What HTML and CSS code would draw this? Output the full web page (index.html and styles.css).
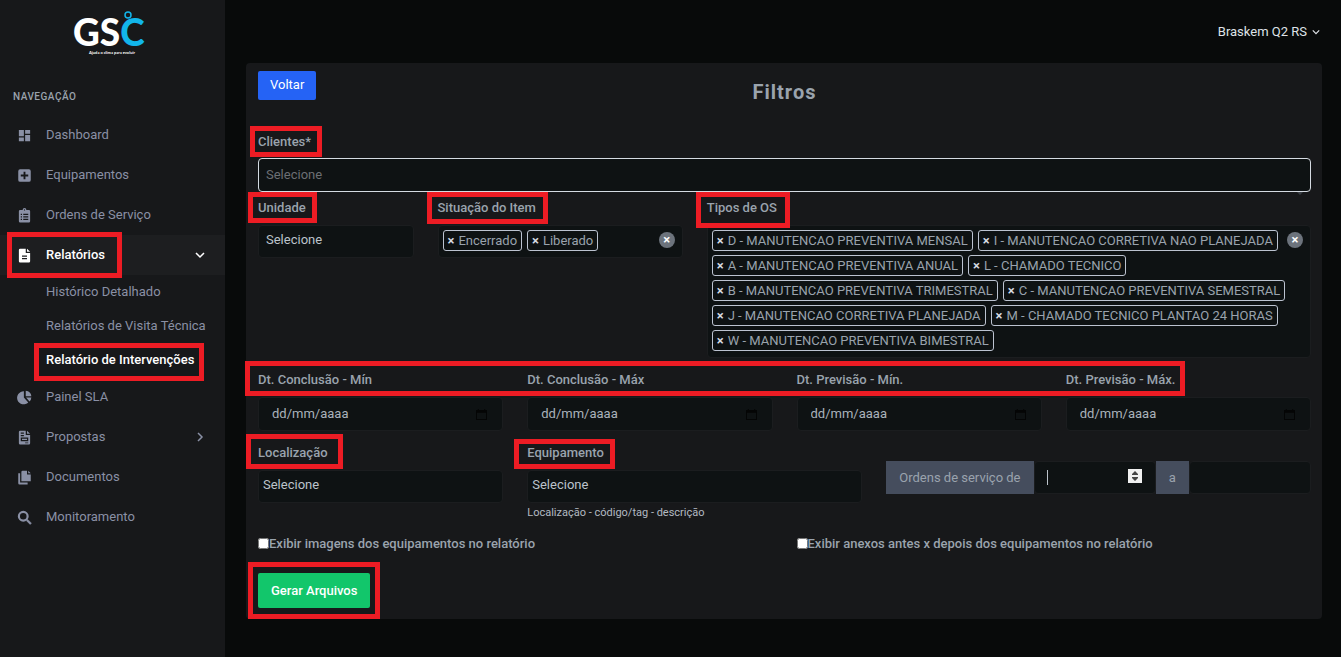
FILE: index.html
```html
<!DOCTYPE html>
<html lang="pt-BR">
<head>
<meta charset="utf-8">
<title>GSC - Relatório de Intervenções</title>
<link rel="stylesheet" href="styles.css">
</head>
<body>
<div class="app">
  <aside class="sidebar">
    <a class="logo" href="#" aria-label="GSC">
      <svg width="76" height="44" viewBox="0 0 76 44">
        <text class="logo-main" x="0" y="35">GS<tspan class="logo-accent">C</tspan></text>
        <circle cx="55" cy="4" r="3" fill="none" stroke="#12b5ea" stroke-width="1.500"/>
        <text class="logo-tag" x="39" y="43" text-anchor="middle">Ajuda o clima para evoluir</text>
      </svg>
    </a>
    <p class="nav-title">NAVEGAÇÃO</p>
    <nav>
      <ul class="nav">
        <li><a class="nav-link" href="#"><svg class="icon" viewBox="0 0 24 24"><path d="M13 3v6h8V3m-8 18h8V11h-8M3 21h8v-6H3m0-2h8V3H3v10z"/></svg>Dashboard</a></li>
        <li><a class="nav-link" href="#"><svg class="icon" viewBox="0 0 24 24"><path fill-rule="evenodd" d="M5 2h14a3 3 0 0 1 3 3v14a3 3 0 0 1-3 3H5a3 3 0 0 1-3-3V5a3 3 0 0 1 3-3zm5.500 4v4.500H6v3h4.500V18h3v-4.500H18v-3h-4.500V6z"/></svg>Equipamentos</a></li>
        <li><a class="nav-link" href="#"><svg class="icon" viewBox="0 0 24 24"><path fill-rule="evenodd" d="M5 3h4a3 3 0 0 1 6 0h4a2 2 0 0 1 2 2v16a2 2 0 0 1-2 2H5a2 2 0 0 1-2-2V5a2 2 0 0 1 2-2zm7-1a1 1 0 1 0 0 2 1 1 0 0 0 0-2zM6 9v2h2V9zm4 0v2h8V9zm-4 4v2h2v-2zm4 0v2h8v-2zm-4 4v2h2v-2zm4 0v2h8v-2z"/></svg>Ordens de Serviço</a></li>
        <li>
          <a class="nav-link active" href="#"><svg class="icon" viewBox="0 0 24 24"><path fill-rule="evenodd" d="M5 1h9v7h7v13a2 2 0 0 1-2 2H5a2 2 0 0 1-2-2V3a2 2 0 0 1 2-2zm11 0 5 5h-5zM8 12v2h8v-2zm0 4v2h8v-2z"/></svg>Relatórios<svg class="chevron" viewBox="0 0 10 10"><path d="m1 3 4 4 4-4"/></svg><span class="mark mark-reports"></span></a>
          <ul class="subnav">
            <li><a class="sub-link" href="#">Histórico Detalhado</a></li>
            <li><a class="sub-link" href="#">Relatórios de Visita Técnica</a></li>
            <li><a class="sub-link active" href="#">Relatório de Intervenções<span class="mark mark-interventions"></span></a></li>
          </ul>
        </li>
        <li><a class="nav-link" href="#"><svg class="icon" viewBox="0 0 24 24"><path d="M11 2v10l7 8A10.500 10.500 0 1 1 11 2zM14 1a10 10 0 0 1 9 9h-9zM14.500 12H23a10 10 0 0 1-3 6.500z"/></svg>Painel SLA</a></li>
        <li><a class="nav-link" href="#"><svg class="icon" viewBox="0 0 24 24"><path fill-rule="evenodd" d="M5 1h9v7h7v13a2 2 0 0 1-2 2H5a2 2 0 0 1-2-2V3a2 2 0 0 1 2-2zm11 0 5 5h-5zM6 4v2h5V4zm0 4v2h5V8zm0 4v6h12v-6zm2 2h8v2H8zm5 6v1h5v-1z"/></svg>Propostas<svg class="chevron" viewBox="0 0 10 10"><path d="m3 1 4 4-4 4"/></svg></a></li>
        <li><a class="nav-link" href="#"><svg class="icon" viewBox="0 0 24 24"><path d="M9 1h7v6h6v11H7V3a2 2 0 0 1 2-2zm9 0 4 4h-4zM2 5h3v15h12v3H4a2 2 0 0 1-2-2z"/></svg>Documentos</a></li>
        <li><a class="nav-link" href="#"><svg class="icon" viewBox="0 0 24 24"><circle cx="10" cy="10" r="7" fill="none" stroke="currentColor" stroke-width="3.500"/><path d="m15 17 2-2 6 6-2 2z" stroke="currentColor"/></svg>Monitoramento</a></li>
      </ul>
    </nav>
  </aside>

  <main class="main">
    <header class="topbar">
      <button class="user" type="button">Braskem Q2 RS<svg class="user-chevron" viewBox="0 0 10 10"><path d="m1 3 4 4 4-4"/></svg></button>
    </header>

    <form class="card">
      <div class="card-head">
        <button class="btn btn-back" type="button">Voltar</button>
        <h1 class="title">Filtros</h1>
      </div>

      <div class="field clients">
        <label class="label" for="clientes">Clientes*<span class="mark mark-clients"></span></label>
        <input class="control control-focus" id="clientes" type="text" placeholder="Selecione">
      </div>

      <div class="row">
        <div class="field span-2">
          <label class="label" for="unidade">Unidade<span class="mark mark-unit"></span></label>
          <select class="control" id="unidade"><option>Selecione</option></select>
        </div>
        <div class="field span-3">
          <span class="label" id="situacao">Situação do Item<span class="mark mark-status"></span></span>
          <div class="tags" role="group" aria-labelledby="situacao">
            <button class="tag" type="button"><b>×</b>Encerrado</button>
            <button class="tag" type="button"><b>×</b>Liberado</button>
            <button class="clear" type="button" aria-label="Limpar">×</button>
          </div>
        </div>
        <div class="field span-7">
          <span class="label" id="tipos">Tipos de OS<span class="mark mark-types"></span></span>
          <div class="tags" role="group" aria-labelledby="tipos">
            <button class="tag" type="button"><b>×</b>D - MANUTENCAO PREVENTIVA MENSAL</button>
            <button class="tag" type="button"><b>×</b>I - MANUTENCAO CORRETIVA NAO PLANEJADA</button>
            <button class="tag" type="button"><b>×</b>A - MANUTENCAO PREVENTIVA ANUAL</button>
            <button class="tag" type="button"><b>×</b>L - CHAMADO TECNICO</button>
            <button class="tag" type="button"><b>×</b>B - MANUTENCAO PREVENTIVA TRIMESTRAL</button>
            <button class="tag" type="button"><b>×</b>C - MANUTENCAO PREVENTIVA SEMESTRAL</button>
            <button class="tag" type="button"><b>×</b>J - MANUTENCAO CORRETIVA PLANEJADA</button>
            <button class="tag" type="button"><b>×</b>M - CHAMADO TECNICO PLANTAO 24 HORAS</button>
            <button class="tag" type="button"><b>×</b>W - MANUTENCAO PREVENTIVA BIMESTRAL</button>
            <button class="clear" type="button" aria-label="Limpar">×</button>
          </div>
        </div>
      </div>

      <div class="row">
        <div class="field span-3">
          <label class="label" for="conc-min">Dt. Conclusão - Mín</label>
          <div class="date"><input id="conc-min" type="text" placeholder="dd/mm/aaaa"><svg class="calendar" viewBox="0 0 12 12"><path fill-rule="evenodd" d="M2 0h1v1h6V0h1v1h2v11H0V1h2zM1 4v7h10V4z"/></svg></div>
        </div>
        <div class="field span-3">
          <label class="label" for="conc-max">Dt. Conclusão - Máx</label>
          <div class="date"><input id="conc-max" type="text" placeholder="dd/mm/aaaa"><svg class="calendar" viewBox="0 0 12 12"><path fill-rule="evenodd" d="M2 0h1v1h6V0h1v1h2v11H0V1h2zM1 4v7h10V4z"/></svg></div>
        </div>
        <div class="field span-3">
          <label class="label" for="prev-min">Dt. Previsão - Mín.</label>
          <div class="date"><input id="prev-min" type="text" placeholder="dd/mm/aaaa"><svg class="calendar" viewBox="0 0 12 12"><path fill-rule="evenodd" d="M2 0h1v1h6V0h1v1h2v11H0V1h2zM1 4v7h10V4z"/></svg></div>
        </div>
        <div class="field span-3">
          <label class="label" for="prev-max">Dt. Previsão - Máx.</label>
          <div class="date"><input id="prev-max" type="text" placeholder="dd/mm/aaaa"><svg class="calendar" viewBox="0 0 12 12"><path fill-rule="evenodd" d="M2 0h1v1h6V0h1v1h2v11H0V1h2zM1 4v7h10V4z"/></svg></div>
        </div>
        <span class="mark mark-dates"></span>
      </div>

      <div class="row">
        <div class="field span-3">
          <label class="label" for="local">Localização<span class="mark mark-place"></span></label>
          <select class="control control-tight" id="local"><option>Selecione</option></select>
        </div>
        <div class="field span-4">
          <label class="label" for="equip">Equipamento<span class="mark mark-equipment"></span></label>
          <select class="control control-tight" id="equip"><option>Selecione</option></select>
          <small class="hint">Localização - código/tag - descrição</small>
        </div>
        <div class="span-5 range">
          <label class="addon" for="os-de">Ordens de serviço de</label>
          <div class="number">
            <input id="os-de" type="number">
            <span class="caret"></span>
            <svg class="spinner" viewBox="0 0 14 14"><path d="M7 2 4 5v1h6V5zm0 10L4 9V8h6v1z"/></svg>
          </div>
          <label class="addon" for="os-ate">a</label>
          <div class="number"><input id="os-ate" type="number"></div>
        </div>
      </div>

      <div class="row checks">
        <label class="check span-6"><input type="checkbox">Exibir imagens dos equipamentos no relatório</label>
        <label class="check span-6"><input type="checkbox">Exibir anexos antes x depois dos equipamentos no relatório</label>
      </div>

      <button class="btn btn-submit" type="submit">Gerar Arquivos<span class="mark mark-submit"></span></button>
    </form>
  </main>
</div>
</body>
</html>
```
FILE: styles.css
```css
* { box-sizing: border-box; }
body {
  margin: 0;
  background: #080a0a;
  color: #9aa3ad;
  font: 13px/18px Roboto, "Liberation Sans", sans-serif;
}
button, input, select { font: inherit; color: inherit; }
button { cursor: pointer; }
a { color: inherit; text-decoration: none; }
ul { list-style: none; margin: 0; padding: 0; }

.app { display: flex; min-height: 100vh; }

/* Sidebar */
.sidebar { flex: 0 0 225px; background: #17181a; }
.logo { display: flex; justify-content: center; padding: 11px 4px 0 0; }
.logo svg { overflow: visible; }
.logo-main { font: 900 37px Lato, sans-serif; fill: #fff; }
.logo-accent { fill: #12b5ea; }
.logo-tag { font: 700 4px Lato, sans-serif; fill: #fff; }
.nav-title {
  margin: 33px 0 9px;
  padding-left: 13px;
  font-size: 10px;
  font-weight: 500;
  letter-spacing: 0.5px;
}
.nav { color: #8a90a5; }
.nav-link {
  position: relative;
  display: flex;
  align-items: center;
  height: 40px;
  padding: 0 20px 0 17px;
}
.nav-link.active { background: #1d1e20; color: #fff; font-weight: 500; }
.icon { width: 15px; height: 15px; margin-right: 14px; fill: currentColor; }
.chevron, .user-chevron {
  width: 10px;
  height: 10px;
  fill: none;
  stroke: currentColor;
  stroke-width: 1.5;
}
.chevron { margin-left: auto; }
.user-chevron { width: 8px; height: 8px; }
.sub-link {
  position: relative;
  display: block;
  padding: 8px 0 8px 46px;
  white-space: nowrap;
}
.sub-link.active { color: #fff; font-weight: 500; }

/* Content */
.main { flex: 1; min-width: 0; padding: 0 19px 39px 21px; }
.topbar { display: flex; justify-content: flex-end; align-items: center; height: 63px; }
.user {
  display: flex;
  align-items: center;
  gap: 5px;
  padding: 0 2px 0 0;
  border: 0;
  background: none;
  color: #dfe3e8;
}
.card {
  padding: 8px 11px 11px 12px;
  border-radius: 4px;
  background: #17181a;
}
.card-head {
  display: grid;
  grid-template-columns: 1fr auto 1fr;
  align-items: start;
  margin-bottom: 29px;
}
.title {
  margin: 9px 0 0;
  font-size: 20px;
  line-height: 24px;
  font-weight: 700;
  letter-spacing: 1px;
}
.btn {
  position: relative;
  border: 0;
  border-radius: 2px;
  color: #fff;
}
.btn-back { justify-self: start; height: 29px; padding: 0 12px 2px; background: #2563f5; }
.btn-submit { display: block; height: 35px; padding: 0 13px; background: #12c66b; font-weight: 500; }

.row {
  position: relative;
  display: grid;
  grid-template-columns: repeat(12, minmax(0, 1fr));
  align-items: start;
  column-gap: 24px;
  margin-bottom: 13px;
}
.span-2 { grid-column: span 2; }
.span-3 { grid-column: span 3; }
.span-4 { grid-column: span 4; }
.span-5 { grid-column: span 5; }
.span-6 { grid-column: span 6; }
.span-7 { grid-column: span 7; }

.field { display: flex; flex-direction: column; align-items: stretch; }
.label {
  position: relative;
  align-self: flex-start;
  margin-bottom: 8px;
  font-weight: 500;
}
.control, .tags, .date, .number {
  border: 1px solid #1b1d1f;
  border-radius: 4px;
  background: #0e1213;
}
.control {
  appearance: none;
  width: 100%;
  height: 33px;
  padding: 0 7px 4px;
  color: #bcc3cb;
}
.control-tight { padding-left: 4px; }
.control-focus { height: 34px; padding-bottom: 2px; border-color: #d5dbe2; }
.control-focus::placeholder { color: #6c6f73; }
.clients { position: relative; margin-bottom: 7px; }
.clients .label { margin-bottom: 7px; }
.clients::after {
  content: "";
  position: absolute;
  right: 8px;
  top: 100%;
  border: 3px solid transparent;
  border-top-color: #3a3e44;
}

.tags {
  position: relative;
  display: flex;
  flex-wrap: wrap;
  gap: 4px 5px;
  padding: 4px 18px 6px 4px;
}
.tag {
  display: flex;
  align-items: center;
  gap: 4px;
  height: 21px;
  padding: 0 4px;
  border: 1px solid #bcc3d0;
  border-radius: 3px;
  background: none;
  white-space: nowrap;
}
.tag b { color: #d5dbe2; }
.clear {
  position: absolute;
  top: 6px;
  right: 7px;
  width: 16px;
  height: 16px;
  padding: 0;
  border: 0;
  border-radius: 50%;
  background: #6c737c;
  color: #fff;
  font-weight: 700;
  line-height: 14px;
}

.date { display: flex; align-items: center; height: 34px; padding: 0 15px 0 13px; }
.date input, .number input {
  flex: 1;
  min-width: 0;
  width: 100%;
  padding: 0;
  border: 0;
  outline: 0;
  background: none;
}
.date input::placeholder { color: #aab2bb; }
.calendar { width: 11px; height: 11px; fill: #040505; }

.hint { padding-top: 1px; color: #b3bac2; font-size: 11px; }
.range { display: flex; height: 33px; margin-top: 17px; }
.addon {
  display: flex;
  align-items: center;
  padding: 0 13px;
  background: #454d5d;
  white-space: nowrap;
}
.number { position: relative; flex: 1; display: flex; padding: 0 12px; }
.number input { appearance: textfield; }
.number input::-webkit-inner-spin-button { display: none; }
.caret { position: absolute; left: 12px; top: 8px; width: 1px; height: 15px; background: #bcc3cb; }
.spinner { position: absolute; right: 13px; top: 7px; width: 14px; height: 14px; background: #f0f0f0; fill: #444; }

.checks { margin: 0 0 20px; }
.check { display: flex; align-items: center; font-weight: 500; }
.check input { width: 11px; height: 11px; margin: 0 0 2px; }

/* Highlight frames */
.mark { position: absolute; border: 5px solid #ed1c24; pointer-events: none; z-index: 1; }
.mark-reports { inset: -3px 103px -3px 7px; }
.mark-interventions { inset: 0 21px -4px 34px; }
.mark-clients { inset: -7px -11px -6px -8px; }
.mark-unit { inset: -7px -11px -6px -10px; }
.mark-status { inset: -7px -12px -7px -11px; }
.mark-types { inset: -7px -13px -11px -11px; }
.mark-dates { inset: -10px 126px auto -13px; height: 35px; }
.mark-place { inset: -10px -15px -7px -12px; }
.mark-equipment { inset: -5px -11px -7px -13px; }
.mark-submit { inset: -11px -10px; }
```
